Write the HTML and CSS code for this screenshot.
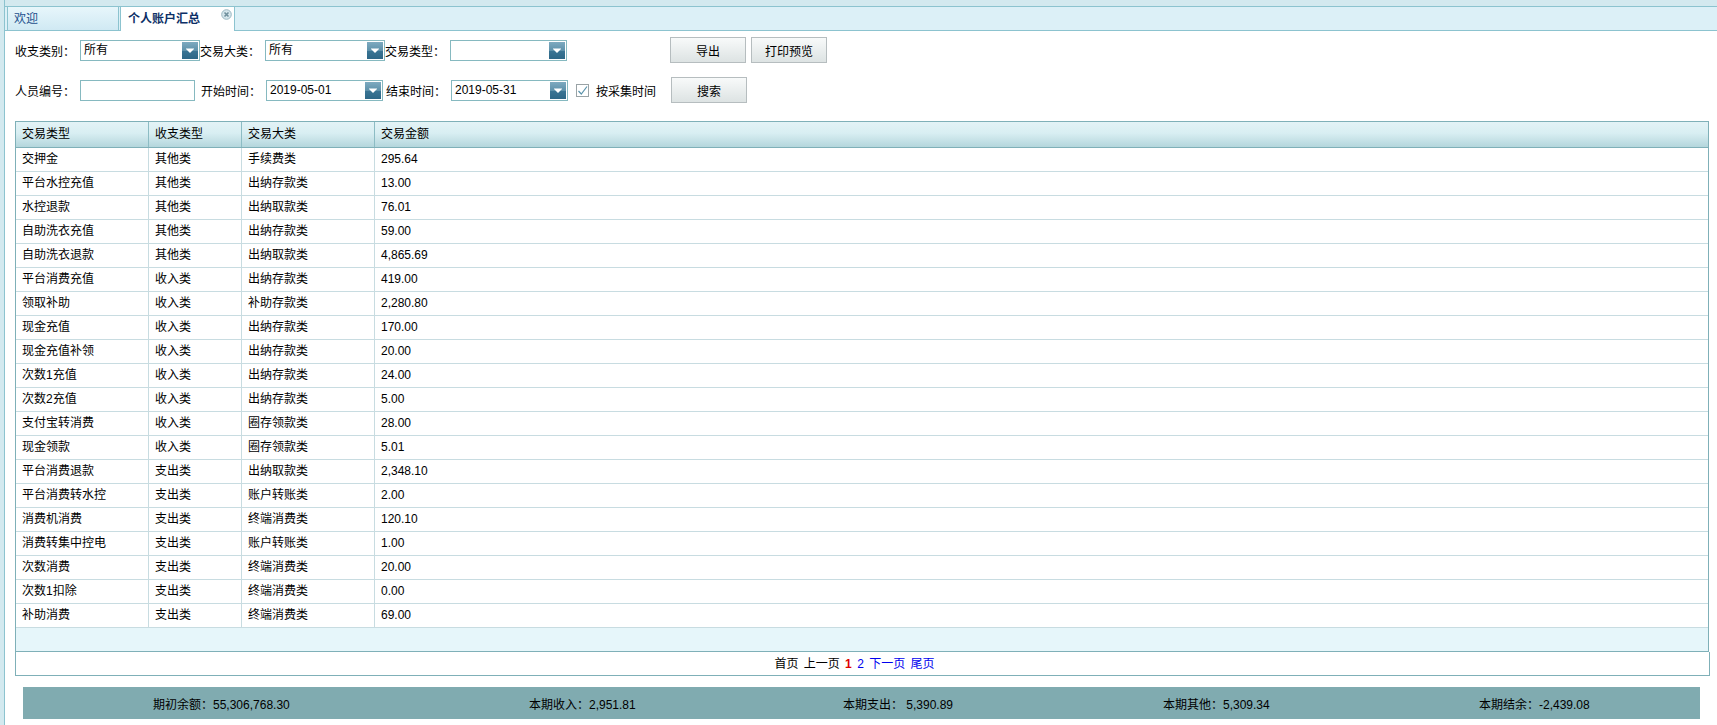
FILE: index.html
```html
<!DOCTYPE html>
<html lang="zh-CN">
<head>
<meta charset="utf-8">
<title>个人账户汇总</title>
<link rel="stylesheet" href="styles.css">
</head>
<body>
<div class="frame">
  <div class="side"></div>
  <div class="main">
    <div class="tabtop">
      <div class="tabbar">
        <div class="tab">欢迎</div>
        <div class="tab active">个人账户汇总
          <svg class="close" width="11" height="11" viewBox="0 0 11 11"><circle cx="5.5" cy="5.5" r="4.8" fill="#d5e6ec" stroke="#9ab7c2" stroke-width="1"/><path d="M3.5 3.5 L7.5 7.5 M7.5 3.5 L3.5 7.5" stroke="#6f8f9c" stroke-width="1.6"/></svg>
        </div>
      </div>
    </div>
    <div class="content">
      <div class="form-row">
        <span class="lbl">收支类别：</span>
        <div class="combo"><span class="combo-text">所有</span><span class="combo-arrow"></span></div>
        <span class="lbl">交易大类：</span>
        <div class="combo"><span class="combo-text">所有</span><span class="combo-arrow"></span></div>
        <span class="lbl">交易类型：</span>
        <div class="combo narrow"><span class="combo-text"></span><span class="combo-arrow"></span></div>
        <div class="spacer1"></div>
        <button class="btn">导出</button>
        <button class="btn">打印预览</button>
      </div>
      <div class="form-row row2">
        <span class="lbl">人员编号：</span>
        <div class="text-input"></div>
        <span class="lbl gapl">开始时间：</span>
        <div class="combo narrow"><span class="combo-text">2019-05-01</span><span class="combo-arrow"></span></div>
        <span class="lbl gapl2">结束时间：</span>
        <div class="combo narrow"><span class="combo-text">2019-05-31</span><span class="combo-arrow"></span></div>
        <span class="check"><svg width="11" height="11" viewBox="0 0 11 11"><path d="M1.5 6 L4.3 9 L10 1.5" fill="none" stroke="#5b93ab" stroke-width="1.2"/></svg></span>
        <span class="check-lbl">按采集时间</span>
        <button class="btn">搜索</button>
      </div>

      <div class="grid">
        <div class="row head">
          <div class="cell">交易类型</div><div class="cell">收支类型</div><div class="cell">交易大类</div><div class="cell">交易金额</div>
        </div>
        <div class="row"><div class="cell">交押金</div><div class="cell">其他类</div><div class="cell">手续费类</div><div class="cell">295.64</div></div>
        <div class="row"><div class="cell">平台水控充值</div><div class="cell">其他类</div><div class="cell">出纳存款类</div><div class="cell">13.00</div></div>
        <div class="row"><div class="cell">水控退款</div><div class="cell">其他类</div><div class="cell">出纳取款类</div><div class="cell">76.01</div></div>
        <div class="row"><div class="cell">自助洗衣充值</div><div class="cell">其他类</div><div class="cell">出纳存款类</div><div class="cell">59.00</div></div>
        <div class="row"><div class="cell">自助洗衣退款</div><div class="cell">其他类</div><div class="cell">出纳取款类</div><div class="cell">4,865.69</div></div>
        <div class="row"><div class="cell">平台消费充值</div><div class="cell">收入类</div><div class="cell">出纳存款类</div><div class="cell">419.00</div></div>
        <div class="row"><div class="cell">领取补助</div><div class="cell">收入类</div><div class="cell">补助存款类</div><div class="cell">2,280.80</div></div>
        <div class="row"><div class="cell">现金充值</div><div class="cell">收入类</div><div class="cell">出纳存款类</div><div class="cell">170.00</div></div>
        <div class="row"><div class="cell">现金充值补领</div><div class="cell">收入类</div><div class="cell">出纳存款类</div><div class="cell">20.00</div></div>
        <div class="row"><div class="cell">次数1充值</div><div class="cell">收入类</div><div class="cell">出纳存款类</div><div class="cell">24.00</div></div>
        <div class="row"><div class="cell">次数2充值</div><div class="cell">收入类</div><div class="cell">出纳存款类</div><div class="cell">5.00</div></div>
        <div class="row"><div class="cell">支付宝转消费</div><div class="cell">收入类</div><div class="cell">圈存领款类</div><div class="cell">28.00</div></div>
        <div class="row"><div class="cell">现金领款</div><div class="cell">收入类</div><div class="cell">圈存领款类</div><div class="cell">5.01</div></div>
        <div class="row"><div class="cell">平台消费退款</div><div class="cell">支出类</div><div class="cell">出纳取款类</div><div class="cell">2,348.10</div></div>
        <div class="row"><div class="cell">平台消费转水控</div><div class="cell">支出类</div><div class="cell">账户转账类</div><div class="cell">2.00</div></div>
        <div class="row"><div class="cell">消费机消费</div><div class="cell">支出类</div><div class="cell">终端消费类</div><div class="cell">120.10</div></div>
        <div class="row"><div class="cell">消费转集中控电</div><div class="cell">支出类</div><div class="cell">账户转账类</div><div class="cell">1.00</div></div>
        <div class="row"><div class="cell">次数消费</div><div class="cell">支出类</div><div class="cell">终端消费类</div><div class="cell">20.00</div></div>
        <div class="row"><div class="cell">次数1扣除</div><div class="cell">支出类</div><div class="cell">终端消费类</div><div class="cell">0.00</div></div>
        <div class="row last"><div class="cell">补助消费</div><div class="cell">支出类</div><div class="cell">终端消费类</div><div class="cell">69.00</div></div>
        <div class="filler"></div>
      </div>
      <div class="pager">首页 上一页 <span class="cur">1</span> <span class="lnk">2</span> <span class="lnk">下一页</span> <span class="lnk">尾页</span></div>

      <div class="summary">
        <div class="sum-cell">期初余额：55,306,768.30</div>
        <div class="sum-cell">本期收入：2,951.81</div>
        <div class="sum-cell">本期支出：&nbsp;5,390.89</div>
        <div class="sum-cell">本期其他：5,309.34</div>
        <div class="sum-cell">本期结余：-2,439.08</div>
      </div>
    </div>
  </div>
</div>
</body>
</html>
```
FILE: styles.css
```css
html, body {
  margin: 0;
  padding: 0;
  background: #fff;
}
body {
  font-family: "Liberation Sans", "Noto Sans CJK SC", sans-serif;
  font-size: 12px;
  color: #000;
  width: 1717px;
  height: 725px;
  overflow: hidden;
}
.frame {
  display: flex;
  height: 725px;
}
.side {
  width: 4px;
  background: #d3e9ef;
  border-right: 1px solid #8cc3cf;
  flex: none;
}
.main {
  flex: 1;
  display: flex;
  flex-direction: column;
  min-width: 0;
}
.tabtop {
  background: #d3e9ef;
  padding-top: 6px;
}
.tabbar {
  height: 23px;
  border-top: 1px solid #8cc3cf;
  border-bottom: 1px solid #8cc3cf;
  background: #dcf0f7;
  display: flex;
  padding-left: 2px;
  gap: 1px;
}
.tab {
  position: relative;
  width: 104px;
  height: 23px;
  padding-left: 6px;
  border-left: 1px solid #8cc3cf;
  border-right: 1px solid #8cc3cf;
  background: linear-gradient(#e7f6fb, #d0e9f3);
  color: #1d4f8c;
  line-height: 25px;
}
.tab.active {
  width: 106px;
  padding-left: 7px;
  background: #fff;
  height: 24px;
  color: #0c2f66;
  font-weight: bold;
}
.close {
  position: absolute;
  right: 2px;
  top: 2px;
}
.content {
  padding: 6px 8px 0 10px;
}
.form-row {
  display: flex;
  align-items: center;
  height: 26px;
}
.row2 {
  margin-top: 14px;
}
.lbl {
  width: 65px;
  flex: none;
  white-space: nowrap;
}
.lbl.gapl {
  margin-left: 6px;
}
.lbl.gapl2 {
  margin-left: 3px;
}
.combo {
  width: 120px;
  height: 21px;
  box-sizing: border-box;
  border: 1px solid #86b9c0;
  display: flex;
  align-items: center;
  flex: none;
  background: #fff;
}
.combo.narrow {
  width: 117px;
}
.combo-text {
  flex: 1;
  padding-left: 3px;
  line-height: 19px;
  white-space: nowrap;
}
.combo-arrow {
  position: relative;
  width: 16px;
  height: 17px;
  margin-right: 1px;
  background: linear-gradient(#7eaac0 0%, #5e91aa 50%, #3a7594 51%, #2d6787 100%);
}
.combo-arrow::after {
  content: "";
  position: absolute;
  left: 4px;
  top: 7px;
  border-left: 4px solid transparent;
  border-right: 4px solid transparent;
  border-top: 4px solid #fff;
}
.combo-arrow::before {
  content: "";
  position: absolute;
  left: 4px;
  top: 6px;
  width: 8px;
  height: 1px;
  background: rgba(255,255,255,0.5);
}
.text-input {
  width: 115px;
  height: 21px;
  box-sizing: border-box;
  border: 1px solid #86b9c0;
  flex: none;
}
.spacer1 {
  width: 103px;
  flex: none;
}
.btn {
  width: 76px;
  height: 26px;
  box-sizing: border-box;
  border: 1px solid #b6bdbf;
  background: linear-gradient(#f8fafa, #dde3e3);
  font-family: "Liberation Sans", "Noto Sans CJK SC", sans-serif;
  font-size: 12px;
  color: #000;
  padding: 0;
  margin: 0 5px 0 0;
  flex: none;
}
.check {
  width: 13px;
  height: 13px;
  box-sizing: border-box;
  border: 1px solid #9aa3a6;
  margin-left: 8px;
  display: flex;
  align-items: center;
  justify-content: center;
  flex: none;
}
.check-lbl {
  margin-left: 7px;
  width: 75px;
  flex: none;
}
.grid {
  margin-top: 18px;
  border: 1px solid #7fb0b8;
}
.row {
  display: grid;
  grid-template-columns: 133px 93px 133px 1fr;
  height: 24px;
  box-sizing: border-box;
  border-bottom: 1px solid #c8dce1;
}
.row .cell {
  padding-left: 6px;
  line-height: 23px;
  border-right: 1px solid #c8dce1;
  white-space: nowrap;
  overflow: hidden;
}
.row .cell:last-child {
  border-right: 0;
}
.row.head {
  height: 26px;
  border-bottom: 1px solid #7fb0b8;
  background: linear-gradient(#e3f3f6 0%, #d8eef2 45%, #b4d6dc 100%);
}
.row.head .cell {
  line-height: 25px;
  border-right-color: #8cbcc4;
}
.filler {
  height: 23px;
  background: #e6f6fa;
}
.pager {
  margin-right: -1px;
  height: 24px;
  box-sizing: border-box;
  border: 1px solid #7fb0b8;
  border-top: 0;
  text-align: center;
  line-height: 24px;
  padding-right: 16px;
  word-spacing: 2px;
}
.pager .cur {
  color: #e00000;
  font-weight: bold;
}
.pager .lnk {
  color: #0000ee;
}
.summary {
  margin: 11px 9px 0 8px;
  height: 32px;
  background: #80abb0;
  display: grid;
  grid-template-columns: 376px 314px 320px 316px 1fr;
  padding-left: 130px;
  align-items: center;
}
.sum-cell {
  white-space: nowrap;
}
```
